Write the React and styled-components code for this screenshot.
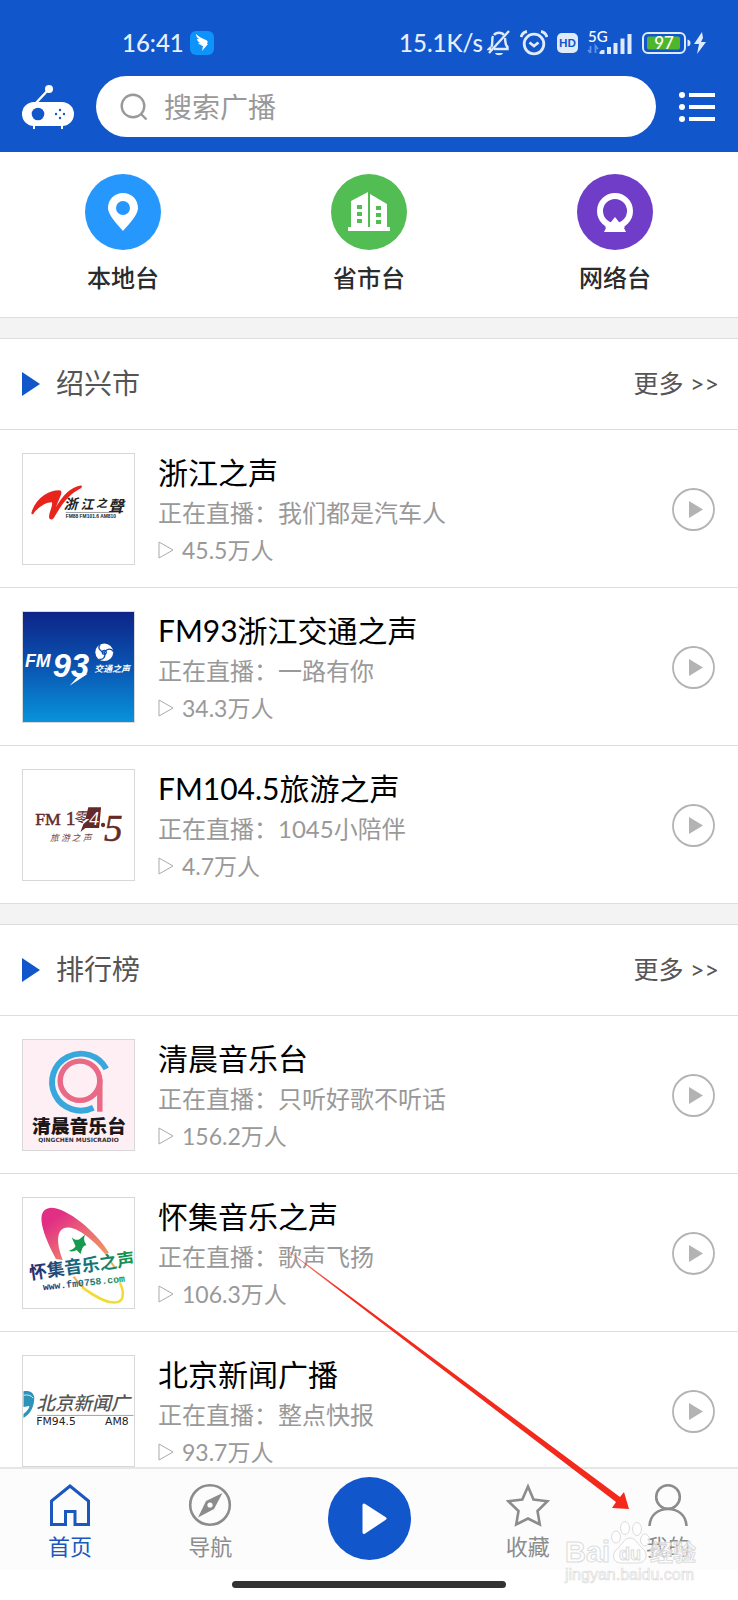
import styled, { createGlobalStyle } from 'styled-components'

const GlobalStyle = createGlobalStyle`
  :root {
    --color-brand: #1156cb;
    --color-line: #dedede;
    --color-muted: #999;
    --font-family: Lato, 'Noto Sans CJK SC', sans-serif;
  }

  * {
    box-sizing: border-box;
  }

  body {
    margin: 0;
    background: #fff;
    font-family: var(--font-family);
    font-size: 24px;
  }

  button,
  input {
    padding: 0;
    border: none;
    background: none;
    font: inherit;
    color: inherit;
  }

  a {
    color: inherit;
    text-decoration: none;
  }

  h2,
  h3,
  p,
  ul {
    margin: 0;
    padding: 0;
    font-weight: 400;
    list-style: none;
  }

  svg {
    display: block;
    flex: none;
  }
`

const sections = [
  {
    title: '绍兴市',
    stations: [
      { name: '浙江之声', show: '我们都是汽车人', count: '45.5万人', Logo: LogoZhejiang },
      { name: 'FM93浙江交通之声', show: '一路有你', count: '34.3万人', Logo: LogoFm93 },
      { name: 'FM104.5旅游之声', show: '1045小陪伴', count: '4.7万人', Logo: LogoFm1045 },
    ],
  },
  {
    title: '排行榜',
    stations: [
      { name: '清晨音乐台', show: '只听好歌不听话', count: '156.2万人', Logo: LogoQingchen },
      { name: '怀集音乐之声', show: '歌声飞扬', count: '106.3万人', Logo: LogoHuaiji },
      { name: '北京新闻广播', show: '整点快报', count: '93.7万人', Logo: LogoBeijing },
    ],
  },
]

export default function App() {
  return (
    <Screen>
      <GlobalStyle />
      <Header>
        <StatusBar />
        <SearchRow>
          <RadioIcon />
          <SearchBox>
            <SearchIcon />
            <input type='search' placeholder='搜索广播' aria-label='搜索广播' />
          </SearchBox>
          <button aria-label='菜单'>
            <ListIcon />
          </button>
        </SearchRow>
      </Header>

      <Content>
        <Categories>
          <Category href='#' $color='#2698fd'>
            <span>
              <PinIcon />
            </span>
            本地台
          </Category>
          <Category href='#' $color='#52bd52'>
            <span>
              <BuildingIcon />
            </span>
            省市台
          </Category>
          <Category href='#' $color='#6f3dc8'>
            <span>
              <NetworkIcon />
            </span>
            网络台
          </Category>
        </Categories>

        {sections.map((section) => (
          <Section key={section.title}>
            <SectionHeader>
              <svg width='18' height='24' viewBox='0 0 18 24'>
                <path d='M0 0 18 12 0 24Z' fill='#1156cb' />
              </svg>
              <h2>{section.title}</h2>
              <a href='#'>更多 &gt;&gt;</a>
            </SectionHeader>
            <ul>
              {section.stations.map((station) => (
                <Station key={station.name} {...station} />
              ))}
            </ul>
          </Section>
        ))}
      </Content>

      <Footer>
        <TabBar>
          <Tab href='#' $active>
            <HomeIcon />
            首页
          </Tab>
          <Tab href='#'>
            <CompassIcon />
            导航
          </Tab>
          <PlayTab>
            <button aria-label='播放'>
              <svg width='83' height='83' viewBox='0 0 83 83'>
                <path d='M36 28 57 41.500 36 55.500Z' fill='#fff' stroke='#fff' strokeWidth='3' strokeLinejoin='round' />
              </svg>
            </button>
          </PlayTab>
          <Tab href='#'>
            <StarIcon />
            收藏
          </Tab>
          <Tab href='#'>
            <UserIcon />
            我的
          </Tab>
        </TabBar>
        <HomeIndicator />
        <Watermark />
      </Footer>
      <Pointer />
    </Screen>
  )
}

function StatusBar() {
  return (
    <Status>
      <span>16:41</span>
      <svg width='24' height='24' viewBox='0 0 24 24'>
        <rect width='24' height='24' rx='6' fill='#0d93fa' />
        <path d='M6 3c3 3 6 4 10 6 2 1 2 2 1 4l1 0-6 7 1-5h-2l1-1c-2 0-3-1-4-2h2C8 11 7 9 7 8h2C7 7 6 5 6 3Z' fill='#fff' />
      </svg>
      <StatusRight>
        <span>15.1K/s</span>
        <svg width='24' height='26' viewBox='0 0 24 26' fill='none' stroke='#dfeafa' strokeWidth='2.400'>
          <path d='M7 5c2-3 8-3 10 0M4.500 17C6 13 4.500 9 6 6M18 8c.5 4 0 7 2.500 9v2H7' />
          <path d='M22 1 2 23M4 17l-2 2h2' />
          <path d='M8 23h8c-1 3-7 3-8 0Z' fill='#dfeafa' stroke='none' />
        </svg>
        <svg width='28' height='26' viewBox='0 0 28 26' fill='none' stroke='#dfeafa' strokeWidth='2.800'>
          <circle cx='14' cy='14' r='9.800' />
          <path d='m9.500 12.500 4.500 3.500 4.500-3.500' />
          <path d='M1 7C2 4 4 2 7 1.500M27 7c-1-3-3-5-6-5.500' />
        </svg>
        <svg width='21' height='20' viewBox='0 0 21 20'>
          <rect width='21' height='20' rx='5' fill='#dfeafa' />
          <text x='10.500' y='14' textAnchor='middle' fontSize='11' fontWeight='900' fill='#1156cb'>
            HD
          </text>
        </svg>
        <svg width='46' height='34' viewBox='0 -4 46 34'>
          <text x='1' y='12' fontSize='15' fill='#fff'>
            5G
          </text>
          <path d='M3.500 16v7M1 20l2.500 3M8.500 23v-7l2.500 3' stroke='#5d93ea' strokeWidth='1.800' fill='none' />
          <path d='M12.500 22l2-2h3v4h-5ZM20 17h4v7h-4ZM26.500 13h4v11h-4ZM33.500 8.500h4V24h-4ZM40.500 4h4v20h-4Z' fill='#dfeafa' />
        </svg>
        <svg width='66' height='22' viewBox='0 0 66 22'>
          <rect x='1' y='1' width='42' height='20' rx='5' fill='none' stroke='#dfeafa' strokeWidth='2' />
          <rect x='5' y='4.500' width='33' height='13' rx='2' fill='#4fb52b' />
          <path d='M45.500 7.500q3 .5 3 3.500t-3 3.500Z' fill='#dfeafa' />
          <text x='22' y='17' textAnchor='middle' fontSize='17' fontWeight='500' fill='#fff'>
            97
          </text>
          <path d='m60 0-8 12h5l-2 10 9-12h-5l2-4Z' fill='#dfeafa' />
        </svg>
      </StatusRight>
    </Status>
  )
}

function Station({ name, show, count, Logo }) {
  return (
    <StationRow>
      <Cover>
        <Logo />
      </Cover>
      <StationInfo>
        <h3>{name}</h3>
        <p>正在直播：{show}</p>
        <Listeners>
          <svg width='16' height='18' viewBox='0 0 16 18'>
            <path d='M1 1 15 9 1 17Z' fill='none' stroke='#aaa' />
          </svg>
          {count}
        </Listeners>
      </StationInfo>
      <button aria-label={`播放 ${name}`}>
        <svg width='43' height='43' viewBox='0 0 43 43'>
          <circle cx='21.500' cy='21.500' r='20.500' fill='none' stroke='#b3b3b3' strokeWidth='1.800' />
          <path d='M17 13 31 21.500 17 30Z' fill='#b3b3b3' />
        </svg>
      </button>
    </StationRow>
  )
}

function LogoZhejiang() {
  return (
    <svg viewBox='0 0 112 112'>
      <path d='M8 60C12 45 26 37 36 37c3 0 3 2 2 5l-5 12C40 42 48 34 58 32c2 0 2 2 0 3-12 6-19 16-27 30-2 3-5 2-5-1 0-5 4-11 3-15-7 0-15 6-19 12-1 1-2 0-2-1Z' fill='#e8251c' />
      <g fill='#222' fontWeight='700' fontStyle='italic'>
        <text x='41' y='56' fontSize='14'>
          浙
        </text>
        <text x='58' y='56' fontSize='13'>
          江
        </text>
        <text x='74' y='54' fontSize='11'>
          之
        </text>
        <text x='86' y='59' fontSize='16'>
          聲
        </text>
      </g>
      <path d='M43 59.500h44' stroke='#555' strokeWidth='.6' />
      <text x='43' y='65.500' fontSize='5' fontFamily='Liberation Sans, sans-serif' fontWeight='700' fill='#222'>
        FM88 FM101.6 AM810
      </text>
    </svg>
  )
}

function LogoFm93() {
  return (
    <svg viewBox='0 0 112 112' preserveAspectRatio='none'>
      <defs>
        <linearGradient id='fm93' x1='0' y1='0' x2='0' y2='1'>
          <stop offset='0' stopColor='#0d2488' />
          <stop offset='.5' stopColor='#0a55b2' />
          <stop offset='1' stopColor='#0893da' />
        </linearGradient>
      </defs>
      <rect width='112' height='112' fill='url(#fm93)' />
      <g fill='#fff' fontWeight='700' fontStyle='italic'>
        <text x='2' y='56' fontSize='18' fontFamily='Liberation Sans, sans-serif'>
          FM
        </text>
        <text x='30' y='66' fontSize='33' fontFamily='Liberation Sans, sans-serif'>
          93
        </text>
        <text x='72' y='61' fontSize='9'>
          交通之声
        </text>
      </g>
      <path d='m57 64-10 11 18-12Z' fill='#fff' />
      <circle cx='82' cy='41' r='9' fill='#fff' />
      <g fill='none' stroke='#0b4fae' strokeWidth='1.300'>
        <path d='M82 41c-5-1-7-5-4-8M82 41c3-4 7-4 9-1M82 41c2 4-1 8-5 7' />
        <circle cx='82' cy='41' r='2' />
      </g>
    </svg>
  )
}

function LogoFm1045() {
  return (
    <svg viewBox='0 0 112 112'>
      <path d='M66 38h13l-2 21H63l-5 4 3-8 6-5h-4Z' fill='#642a28' />
      <g fill='#642a28' stroke='#642a28' strokeWidth='.5' fontFamily='Liberation Serif, serif'>
        <text x='12' y='56' fontSize='18'>
          FM
        </text>
        <text x='43' y='56' fontSize='20'>
          1
        </text>
        <text x='82' y='72' fontSize='38' fontStyle='italic'>
          5
        </text>
      </g>
      <text x='51' y='53' fontSize='14' fill='#642a28' fontStyle='italic'>
        零
      </text>
      <text x='67' y='56' fontSize='20' fill='#fff' fontFamily='Liberation Serif, serif' fontStyle='italic'>
        4
      </text>
      <circle cx='81' cy='56' r='2.200' fill='#642a28' />
      <text x='27' y='72' fontSize='9' fill='#7a4745' fontStyle='italic'>
        旅 游 之 声
      </text>
    </svg>
  )
}

function LogoQingchen() {
  return (
    <svg viewBox='0 0 112 112' preserveAspectRatio='none'>
      <rect width='112' height='112' fill='#feeff5' />
      <path d='M84 29.500A29 29 0 1 0 71 69' fill='none' stroke='#38a8dc' strokeWidth='6' />
      <circle cx='57.500' cy='41.500' r='20' fill='none' stroke='#e86a86' strokeWidth='5.500' />
      <path d='M77.500 40v33' stroke='#e86a86' strokeWidth='5.500' />
      <text x='9' y='95' fontSize='19' fontWeight='900' fill='#1c1718'>
        清晨音乐台
      </text>
      <text x='56' y='104' textAnchor='middle' fontSize='6' fontFamily='DejaVu Sans, sans-serif' fontWeight='700' fill='#333'>
        QINGCHEN MUSICRADIO
      </text>
    </svg>
  )
}

function LogoHuaiji() {
  return (
    <svg viewBox='0 0 112 112'>
      <defs>
        <linearGradient id='ring' x1='0' y1='0' x2='1' y2='1'>
          <stop offset='.2' stopColor='#e12f86' />
          <stop offset='.6' stopColor='#ec6f72' />
          <stop offset='1' stopColor='#f2a05a' />
        </linearGradient>
        <linearGradient id='word' x1='0' y1='0' x2='1' y2='0'>
          <stop offset='0' stopColor='#27296f' />
          <stop offset='.5' stopColor='#146f80' />
          <stop offset='1' stopColor='#159a4a' />
        </linearGradient>
      </defs>
      <path d='M40 63C31 40 36 29 46 30c12 1 27 15 37 27l4-1C74 34 44 10 28 10 13 11 16 30 33 62Z' fill='url(#ring)' />
      <path d='M60 91c12 9 27 17 36 15 7-2 6-12 2-20' fill='none' stroke='#f0dc35' strokeWidth='2.600' />
      <path d='M51 80c3 4 6 8 10 11M89 65l4 6' fill='none' stroke='#f0b050' strokeWidth='2' />
      <path d='M46 54c4-2 6-3 7-5l-4-9c3 3 6 3 8 2l6-5c-2 4-1 5-1 7l2 4c-2 0-3 1-4 3l-2 6-4-4c-2 1-4 2-8 1Z' fill='#159a50' />
      <text x='7' y='83' fontSize='18' fontWeight='700' fill='url(#word)' transform='rotate(-8 7 83)'>
        怀集音乐之声
      </text>
      <text x='20' y='94' fontSize='10' fontWeight='700' fontFamily='Liberation Mono, monospace' fill='url(#word)' transform='rotate(-6 20 94)'>
        www.fm0758.com
      </text>
    </svg>
  )
}

function LogoBeijing() {
  return (
    <svg viewBox='0 0 112 112'>
      <path d='M0 36c6-1 10 1 11 6 0 10-4 17-11 21v-4c4-3 6-6 6-8l-6 1Z' fill='#2e93b8' />
      <path d='M0 40c4-1 8 0 10 3' fill='none' stroke='#d7eef5' />
      <text x='13' y='55' fontSize='19' fontStyle='italic' fontWeight='500' fill='#555'>
        北京新闻广
      </text>
      <path d='M14 60.500h98' stroke='#888' strokeWidth='.8' />
      <g fontSize='11' fontFamily='DejaVu Sans, sans-serif' fill='#222'>
        <text x='13' y='70'>
          FM94.5
        </text>
        <text x='83' y='70'>
          AM8
        </text>
      </g>
    </svg>
  )
}

function RadioIcon() {
  return (
    <svg width='52' height='46' viewBox='0 0 52 46'>
      <path d='M13 20 27 5' stroke='#fff' strokeWidth='2.400' />
      <circle cx='27' cy='5' r='4' fill='#fff' />
      <rect y='18' width='52' height='24' rx='12' fill='#fff' />
      <path d='M11 40h2v5h-2ZM39 40h2v5h-2Z' fill='#fff' />
      <circle cx='16' cy='30' r='6.300' fill='#1156cb' />
      <g fill='#1156cb'>
        <circle cx='38' cy='26' r='1.200' />
        <circle cx='38' cy='34' r='1.200' />
        <circle cx='34' cy='30' r='1.200' />
        <circle cx='42' cy='30' r='1.200' />
      </g>
    </svg>
  )
}

function SearchIcon() {
  return (
    <svg width='28' height='28' viewBox='0 0 28 28' fill='none' stroke='#999' strokeWidth='2.400'>
      <circle cx='13' cy='13' r='11.300' />
      <path d='m20.500 20.500 6 6' />
    </svg>
  )
}

function ListIcon() {
  return (
    <svg width='36' height='32' viewBox='0 0 36 32' fill='#fff'>
      <circle cx='3' cy='4' r='3' />
      <circle cx='3' cy='16' r='3' />
      <circle cx='3' cy='28' r='3' />
      <path d='M10 2h26v4H10ZM10 14h26v4H10ZM10 26h26v4H10Z' />
    </svg>
  )
}

function PinIcon() {
  return (
    <svg width='76' height='76' viewBox='0 0 76 76'>
      <path d='M38 19c8.500 0 15 6.500 15 15 0 7-9 16-15 23-6-7-15-16-15-23 0-8.500 6.500-15 15-15Zm0 8a7 7 0 1 0 0 14 7 7 0 0 0 0-14Z' fill='#fff' />
    </svg>
  )
}

function BuildingIcon() {
  return (
    <svg width='76' height='76' viewBox='0 0 76 76'>
      <path d='M20 27 37 18v35h2V20l17 10v23h3v4H17v-4h3Z' fill='#fff' />
      <path d='M26 31h5v4h-5ZM26 38h5v4h-5ZM26 45h5v4h-5ZM45 32h5v4h-5ZM45 39h5v4h-5ZM45 46h5v4h-5Z' fill='#52bd52' />
    </svg>
  )
}

function NetworkIcon() {
  return (
    <svg width='76' height='76' viewBox='0 0 76 76'>
      <circle cx='38' cy='37' r='15' fill='none' stroke='#fff' strokeWidth='6' />
      <path d='m38 43 4 5 3 2 3 3-1 1 2 4H27l2-4-1-1 3-3 3-2Z' fill='#fff' />
    </svg>
  )
}

function HomeIcon() {
  return (
    <svg width='44' height='44' viewBox='0 0 44 44'>
      <path d='M3.500 41.500V18L22 3l18.500 15v23.500H27V28.500H17.500v13Z' fill='none' stroke='#1b57bd' strokeWidth='3' />
    </svg>
  )
}

function CompassIcon() {
  return (
    <svg width='44' height='44' viewBox='0 0 44 44'>
      <circle cx='22' cy='22' r='19.800' fill='none' stroke='#8c8c8c' strokeWidth='2.600' />
      <path d='M34.500 10 26 26 10 34.500 18 18Z' fill='#8c8c8c' />
      <circle cx='22' cy='22' r='2.600' fill='#fff' />
    </svg>
  )
}

function StarIcon() {
  return (
    <svg width='44' height='44' viewBox='0 0 44 44'>
      <path d='m22 3.500 5.500 13 14 1.700L31.500 28l2.300 13.500L22 35.500l-11.800 6L12.500 28 2.300 18.200l14-1.700Z' fill='none' stroke='#8c8c8c' strokeWidth='2.600' />
    </svg>
  )
}

function UserIcon() {
  return (
    <svg width='44' height='44' viewBox='0 0 44 44' fill='none' stroke='#8c8c8c' strokeWidth='2.600'>
      <circle cx='22' cy='14' r='11.800' />
      <path d='M3.500 43C4 32 12 26 22 26s18 6 18.500 17' />
    </svg>
  )
}

function Pointer() {
  return (
    <PointerSvg width='360' height='276' viewBox='0 0 360 276'>
      <defs>
        <linearGradient id='fade' x1='0' y1='0' x2='1' y2='1'>
          <stop offset='0' stopColor='#f3291b' stopOpacity='.4' />
          <stop offset='.2' stopColor='#f3291b' />
        </linearGradient>
      </defs>
      <path d='M4 3 40 29.500 350 260l4-5 5 17-17-1 4-6L39 30.300Z' fill='url(#fade)' />
    </PointerSvg>
  )
}

function Watermark() {
  return (
    <WatermarkSvg width='136' height='66' viewBox='0 0 136 66' aria-hidden='true'>
      <g fill='#fff' fillOpacity='.6' stroke='#dcdcdc'>
        <g fontFamily='Liberation Sans, sans-serif' fontWeight='700'>
          <text x='1' y='42' fontSize='29'>
            Bai
          </text>
          <ellipse cx='52' cy='17' rx='4.500' ry='6' />
          <ellipse cx='61' cy='8' rx='4.500' ry='6.500' />
          <ellipse cx='73' cy='9' rx='4.500' ry='6.500' />
          <ellipse cx='81' cy='20' rx='4.500' ry='6' />
          <path d='M66 18c6 0 8 7 13 11 6 5 3 14-5 14H57c-8 0-10-9-4-14 5-4 7-11 13-11Z' />
          <text x='55' y='40' fontSize='18'>
            du
          </text>
        </g>
        <text x='86' y='41' fontSize='23' fontWeight='700'>
          经验
        </text>
        <text x='1' y='60' fontSize='16' fontFamily='Liberation Sans, sans-serif' strokeWidth='.7'>
          jingyan.baidu.com
        </text>
      </g>
    </WatermarkSvg>
  )
}

const Screen = styled.div`
  position: relative;
  display: flex;
  flex-direction: column;
  height: 100vh;
  overflow: hidden;
`

const Header = styled.header`
  padding-bottom: 15px;
  background: var(--color-brand);
  color: #fff;
`

const Status = styled.div`
  display: flex;
  align-items: center;
  gap: 6px;
  height: 76px;
  padding: 9px 30px 0 122px;
  color: #e6effc;
  font-size: 24px;
  font-weight: 500;
`

const StatusRight = styled.div`
  display: flex;
  align-items: center;
  gap: 9px;
  margin-left: auto;

  span {
    margin-right: -5px;
  }
`

const SearchRow = styled.div`
  display: flex;
  align-items: center;
  gap: 22px;
  padding: 0 22px;

  button {
    padding: 0 1px;
  }
`

const SearchBox = styled.label`
  display: flex;
  flex: 1;
  align-items: center;
  gap: 16px;
  height: 61px;
  padding: 0 24px;
  border-radius: 31px;
  background: #fff;

  input {
    flex: 1;
    min-width: 0;
    outline: none;
    color: #333;
    font-size: 28px;
  }

  input::placeholder {
    color: #999;
  }
`

const Content = styled.main`
  flex: 1;
  min-height: 0;
  overflow-y: auto;
  scrollbar-width: none;
`

const Categories = styled.nav`
  display: grid;
  grid-template-columns: repeat(3, 1fr);
  padding: 22px 0 23px;
`

const Category = styled.a`
  display: flex;
  flex-direction: column;
  align-items: center;
  gap: 12px;
  line-height: 32px;
  font-weight: 500;
  color: #2b2b2b;

  span {
    border-radius: 50%;
    background: ${(props) => props.$color};
  }
`

const Section = styled.section`
  border-top: 1px solid var(--color-line);

  &::before {
    content: '';
    display: block;
    height: 20px;
    border-bottom: 1px solid var(--color-line);
    background: #f3f3f3;
  }
`

const SectionHeader = styled.div`
  display: flex;
  align-items: center;
  gap: 16px;
  height: 90px;
  padding: 0 19px 0 22px;
  color: #555;

  h2,
  a {
    padding-bottom: 2px;
    line-height: 40px;
  }

  h2 {
    flex: 1;
    font-size: 28px;
  }

  a {
    font-size: 25px;
  }
`

const StationRow = styled.li`
  display: flex;
  align-items: center;
  gap: 23px;
  padding: 23px 23px 22px 22px;
  border-top: 1px solid var(--color-line);
`

const Cover = styled.div`
  width: 113px;
  height: 112px;
  border: 1px solid #d8d8d8;
  overflow: hidden;

  svg {
    width: 100%;
    height: 100%;
  }
`

const StationInfo = styled.div`
  flex: 1;
  min-width: 0;

  h3 {
    color: #000;
    font-size: 30px;
    line-height: 38px;
  }

  p {
    color: var(--color-muted);
    line-height: 44px;
  }
`

const Listeners = styled.div`
  display: flex;
  align-items: center;
  gap: 8px;
  color: var(--color-muted);
  font-size: 23px;
  line-height: 30px;
`

const Footer = styled.footer`
  position: relative;
  padding-bottom: 12px;
  border-top: 2px solid #e6e6e6;
`

const TabBar = styled.nav`
  display: grid;
  grid-template-columns: 19% 19% 1fr 19% 19%;
  height: 101px;
  background: #fcfcfc;
`

const Tab = styled.a`
  display: flex;
  flex-direction: column;
  align-items: center;
  gap: 5px;
  padding-top: 14px;
  color: ${(props) => (props.$active ? '#1b57bd' : '#8c8c8c')};
  font-size: 22px;
  line-height: 30px;
`

const PlayTab = styled.div`
  display: grid;
  place-items: center;
  padding-bottom: 3px;

  button {
    border-radius: 50%;
    background: var(--color-brand);
  }
`

const HomeIndicator = styled.div`
  width: 37%;
  height: 7px;
  margin: 11px auto 0;
  border-radius: 4px;
  background: #333;
`

const PointerSvg = styled.svg`
  position: absolute;
  right: 108px;
  bottom: 87px;
  pointer-events: none;
`

const WatermarkSvg = styled.svg`
  position: absolute;
  right: 38px;
  bottom: 14px;
  pointer-events: none;
`
